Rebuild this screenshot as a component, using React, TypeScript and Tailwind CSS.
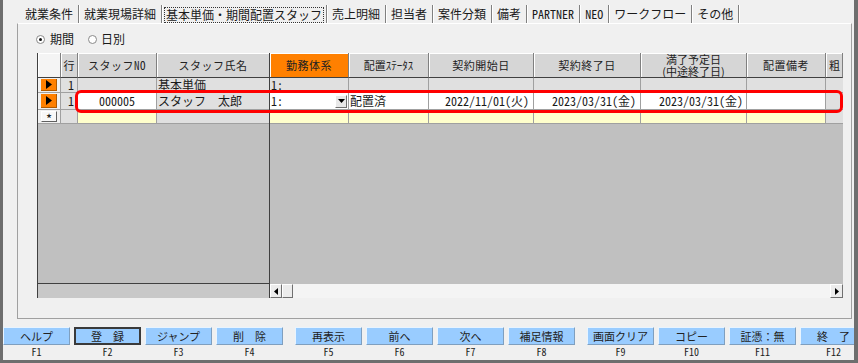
import type { ReactNode } from 'react';

const jp = "font-['Noto_Sans_CJK_JP',sans-serif]";
const hw = "[font-feature-settings:'hwid']";

const TABS = ['就業条件', '就業現場詳細', '基本単価・期間配置スタッフ', '売上明細', '担当者', '案件分類', '備考', 'PARTNER', 'NEO', 'ワークフロー', 'その他'];

const KEYS = [
  [['ヘルプ', 'F1'], ['登　録', 'F2'], ['ジャンプ', 'F3'], ['削　除', 'F4']],
  [['再表示', 'F5'], ['前へ', 'F6'], ['次へ', 'F7'], ['補足情報', 'F8']],
  [['画面クリア', 'F9'], ['コピー', 'F10'], ['証憑：無', 'F11'], ['終　了', 'F12']],
];

function Cell({ className = '', children }: { className?: string; children?: ReactNode }) {
  return (
    <div className={`h-full shrink-0 flex items-center border-r border-b border-[#a0a0a0] whitespace-nowrap text-[12px] leading-none ${className}`}>
      {children}
    </div>
  );
}

function Head({ className = '', children }: { className?: string; children?: ReactNode }) {
  return (
    <div className={`h-full shrink-0 flex flex-col items-center justify-center border-r border-b border-r-[#808080] border-b-[#404040] shadow-[inset_1px_1px_0_#fff] whitespace-nowrap text-[11px] tracking-[0.5px] text-[#222] ${className}`}>
      {children}
    </div>
  );
}

function Arrow() {
  return (
    <div className="h-full w-[23px] shrink-0 bg-[#f0f0f0] border-b border-r border-[#a0a0a0] px-[3px] py-[1px]">
      <div className="h-full bg-[#ff8000] flex items-center justify-center border-r border-b border-[#b05a00]">
        <svg width="6" height="9" viewBox="0 0 6 9"><polygon points="0,0 6,4.5 0,9" fill="#000" /></svg>
      </div>
    </div>
  );
}

export default function App() {
  return (
    <div className={`w-[858px] h-[363px] bg-[#f0f0f0] border-l-[3px] border-r-[4px] border-b-[3px] border-[#6e6e6e] flex flex-col overflow-hidden relative text-[#1a1a1a] ${jp}`}>
      {/* tab strip */}
      <div className="h-[23px] pt-[5px] pl-[17px] flex text-[12px] leading-none">
        {TABS.map((t, i) => (
          <div key={t} className={`h-full flex items-center border-r border-[#808080] shadow-[1px_0_0_#fff] ${i === 2 ? 'px-[2px]' : 'px-[4px]'}`}>
            {i === 2 ? (
              <span className="h-[16px] mt-[1px] flex items-center px-[1px] border border-dotted border-[#333]">{t}</span>
            ) : (
              <span className={`px-[1px] ${/[A-Z]/.test(t) ? hw : ''}`}>{t}</span>
            )}
          </div>
        ))}
      </div>

      {/* tab panel */}
      <div className="ml-[14px] w-[835px] h-[296px] border-t border-t-white border-x border-b border-x-[#a0a0a0] border-b-[#a0a0a0] flex flex-col">
        <div className="mt-[8px] ml-[18px] h-[14px] flex items-center text-[12px] leading-none">
          <span className="w-[9px] h-[9px] rounded-full border border-[#8a8a8a] bg-white flex items-center justify-center">
            <span className="w-[3px] h-[3px] rounded-full bg-[#111]" />
          </span>
          <span className="ml-[5px]">期間</span>
          <span className="ml-[14px] w-[9px] h-[9px] rounded-full border border-[#8a8a8a] bg-white" />
          <span className="ml-[4px]">日別</span>
        </div>

        {/* grid */}
        <div className="mt-[7px] ml-[19px] w-[806px] h-[245px] flex border-l border-[#404040]">
          {/* frozen columns */}
          <div className="w-[232px] shrink-0 flex flex-col border-r border-[#404040]">
            <div className="h-[25px] flex">
              <Head className="w-[23px] bg-[#f4f4f4]" />
              <Head className="w-[17px] bg-[#d6d6d6] tracking-normal">行</Head>
              <Head className={`w-[79px] bg-[#d6d6d6] ${hw}`}>スタッフNO</Head>
              <Head className="w-[112px] bg-[#d6d6d6] border-r-0">スタッフ氏名</Head>
            </div>
            <div className="h-[15px] flex">
              <Arrow />
              <Cell className={`w-[17px] bg-[#e0e0e0] justify-end pr-[3px] ${hw}`}>1</Cell>
              <Cell className="w-[79px] bg-[#e0e0e0]" />
              <Cell className="w-[112px] bg-[#e0e0e0] border-r-0 pl-[1px]">基本単価</Cell>
            </div>
            <div className="h-[17px] flex">
              <Arrow />
              <Cell className={`w-[17px] bg-[#e0e0e0] justify-end pr-[3px] ${hw}`}>1</Cell>
              <Cell className={`w-[79px] bg-white justify-center ${hw}`}>000005</Cell>
              <Cell className="w-[112px] bg-[#e0e0e0] border-r-0 pl-[1px]">スタッフ　太郎</Cell>
            </div>
            <div className="h-[14px] flex">
              <div className="h-full w-[23px] shrink-0 bg-[#f0f0f0] border-b border-r border-[#a0a0a0] px-[3px] py-[1px]">
                <div className="h-full bg-[#f8f8f8] border border-t-white border-l-white border-r-[#606060] border-b-[#606060] flex items-center justify-center text-[13px] leading-none pt-[3px]">*</div>
              </div>
              <Cell className="w-[17px] bg-[#e0e0e0]" />
              <Cell className="w-[79px] bg-[#ffffcc]" />
              <Cell className="w-[112px] bg-[#e0e0e0] border-r-0" />
            </div>
            <div className="flex-1 bg-[#c0c0c0] border-b border-[#404040]" />
            <div className="h-[14px] bg-[#c8c8c8]" />
          </div>

          {/* scrolling columns */}
          <div className="flex-1 min-w-0 flex flex-col">
            <div className="h-[25px] flex">
              <Head className="w-[79px] bg-[#ff8000]">勤務体系</Head>
              <Head className="w-[80px] bg-[#d6d6d6] tracking-normal">配置ｽﾃｰﾀｽ</Head>
              <Head className="w-[105px] bg-[#d6d6d6]">契約開始日</Head>
              <Head className="w-[107px] bg-[#d6d6d6]">契約終了日</Head>
              <Head className="w-[106px] bg-[#d6d6d6] leading-[12px] tracking-normal text-[10px]">
                <span>満了予定日</span>
                <span>(中途終了日)</span>
              </Head>
              <Head className="w-[79px] bg-[#d6d6d6]">配置備考</Head>
              <Head className="flex-1 bg-[#d6d6d6] items-start pl-[3px] overflow-hidden">粗</Head>
            </div>
            <div className="h-[15px] flex">
              <Cell className={`w-[79px] bg-[#e0e0e0] pl-[1px] ${hw}`}>1:</Cell>
              <Cell className="w-[80px] bg-[#e0e0e0]" />
              <Cell className="w-[105px] bg-[#e0e0e0]" />
              <Cell className="w-[107px] bg-[#e0e0e0]" />
              <Cell className="w-[106px] bg-[#e0e0e0]" />
              <Cell className="w-[79px] bg-[#e0e0e0]" />
              <Cell className="flex-1 bg-[#e0e0e0] border-r-0" />
            </div>
            <div className="h-[17px] flex">
              <Cell className={`w-[79px] bg-white pl-[1px] justify-between ${hw}`}>
                <span>1:</span>
                <span className="w-[12px] h-[13px] mr-[1px] bg-[#e8e8e8] border border-t-white border-l-white border-r-[#707070] border-b-[#707070] flex items-center justify-center">
                  <svg width="7" height="4" viewBox="0 0 7 4"><polygon points="0,0 7,0 3.5,4" fill="#000" /></svg>
                </span>
              </Cell>
              <Cell className="w-[80px] bg-white pl-[1px]">配置済</Cell>
              <Cell className={`w-[105px] bg-white justify-end pr-[4px] ${hw}`}>2022/11/01(火)</Cell>
              <Cell className={`w-[107px] bg-white justify-end pr-[4px] ${hw}`}>2023/03/31(金)</Cell>
              <Cell className={`w-[106px] bg-white justify-end pr-[3px] ${hw}`}>2023/03/31(金)</Cell>
              <Cell className="w-[79px] bg-white" />
              <Cell className="flex-1 bg-[#e0e0e0] border-r-0" />
            </div>
            <div className="h-[14px] flex">
              <Cell className="w-[79px] bg-[#ffffcc]" />
              <Cell className="w-[80px] bg-[#ffffcc]" />
              <Cell className="w-[105px] bg-[#ffffcc]" />
              <Cell className="w-[107px] bg-[#ffffcc]" />
              <Cell className="w-[106px] bg-[#ffffcc]" />
              <Cell className="w-[79px] bg-[#ffffcc]" />
              <Cell className="flex-1 bg-[#e0e0e0] border-r-0" />
            </div>
            <div className="flex-1 bg-[#c0c0c0]" />
            <div className="h-[14px] flex bg-[#f4f4f4]">
              <div className="w-[12px] h-full bg-[#ececec] border border-t-white border-l-white border-r-[#707070] border-b-[#707070] flex items-center justify-center">
                <svg width="4" height="7" viewBox="0 0 4 7"><polygon points="4,0 0,3.5 4,7" fill="#000" /></svg>
              </div>
              <div className="w-[11px] h-full bg-[#ececec] border border-t-white border-l-white border-r-[#707070] border-b-[#707070]" />
              <div className="flex-1" />
              <div className="w-[13px] h-full bg-[#ececec] border border-t-white border-l-white border-r-[#707070] border-b-[#707070] flex items-center justify-center">
                <svg width="4" height="7" viewBox="0 0 4 7"><polygon points="0,0 4,3.5 0,7" fill="#000" /></svg>
              </div>
            </div>
          </div>
        </div>
      </div>

      {/* function keys */}
      <div className="mt-[8px] flex gap-[12px]">
        {KEYS.map((group, gi) => (
          <div key={gi} className="flex gap-[4px] shrink-0">
            {group.map(([label, key]) => (
              <div key={key} className="w-[67px] shrink-0 flex flex-col items-center">
                <div
                  className={`w-full h-[18px] bg-[#99ccff] flex items-center justify-center text-[11px] leading-none text-[#222] ${
                    key === 'F2'
                      ? 'border-2 border-[#3a3a3a]'
                      : 'border border-t-[#e8f4ff] border-l-[#e8f4ff] border-r-[#7f9fbf] border-b-[#7f9fbf]'
                  }`}
                >
                  {label}
                </div>
                <div className={`h-[13px] flex items-center text-[10px] leading-none text-[#222] ${hw}`}>{key}</div>
              </div>
            ))}
          </div>
        ))}
      </div>

      {/* red annotation */}
      <div className="absolute left-[72px] top-[90px] w-[768px] h-[23px] border-[3px] border-[#ff0000] rounded-[6px] pointer-events-none" />
    </div>
  );
}
